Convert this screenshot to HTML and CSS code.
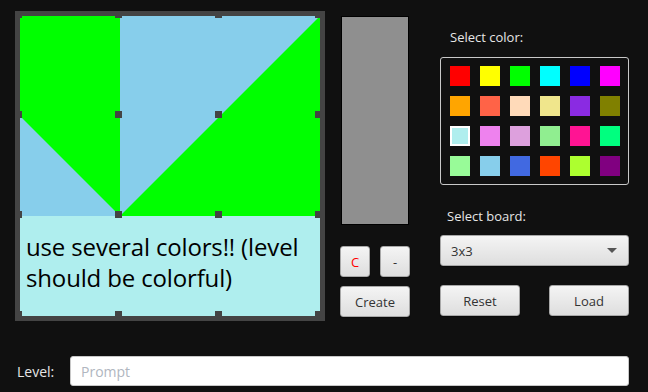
FILE: index.html
```html
<!DOCTYPE html>
<html lang="en">
<head>
<meta charset="UTF-8">
<title>Level Editor</title>
<link rel="stylesheet" href="styles.css">
</head>
<body>
<div class="editor">
    <div class="top">
        <div class="board">
            <svg class="cells" width="300" height="200" viewBox="0 0 300 200">
                <rect x="0" y="0" width="100" height="200" fill="#00ff00"/>
                <polygon points="0,100 100,200 0,200" fill="#87ceeb"/>
                <rect x="100" y="0" width="200" height="200" fill="#87ceeb"/>
                <polygon points="300,0 300,200 100,200" fill="#00ff00"/>
            </svg>
            <div class="hint">use several colors!! (level should be colorful)</div>
            <div class="dots" id="dots"></div>
        </div>

        <div class="middle">
            <div class="preview"></div>
            <div class="small-row">
                <button class="btn btn-sq btn-clear">C</button>
                <button class="btn btn-sq">-</button>
            </div>
            <button class="btn btn-wide">Create</button>
        </div>

        <div class="side">
            <div class="label">Select color:</div>
            <div class="palette" id="palette"></div>
            <div class="label label-board">Select board:</div>
            <div class="combo">
                <span>3x3</span>
                <span class="arrow"></span>
            </div>
            <div class="actions">
                <button class="btn btn-action">Reset</button>
                <button class="btn btn-action">Load</button>
            </div>
        </div>
    </div>

    <div class="level-row">
        <label class="level-label" for="level">Level:</label>
        <input id="level" class="level-input" type="text" placeholder="Prompt">
    </div>
</div>

<script>
const colors = [
    'red', 'yellow', 'lime', 'aqua', 'blue', 'magenta',
    'orange', 'tomato', 'peachpuff', 'khaki', 'blueviolet', 'olive',
    'paleturquoise', 'violet', 'plum', 'lightgreen', 'deeppink', 'springgreen',
    'palegreen', 'skyblue', 'royalblue', 'orangered', 'greenyellow', 'purple'
];
const palette = document.getElementById('palette');
palette.innerHTML = colors.map((c, i) =>
    `<div class="swatch${i === 12 ? ' selected' : ''}" style="background:${c}"></div>`
).join('');

const dots = document.getElementById('dots');
let html = '';
for (let y = 0; y <= 300; y += 100) {
    for (let x = 0; x <= 300; x += 100) {
        html += `<span class="dot" style="left:${x - 5}px;top:${y - 5}px"></span>`;
    }
}
dots.innerHTML = html;
</script>
</body>
</html>
```

FILE: styles.css
```css
body {
    margin: 0;
    background: #101010;
    font-family: 'Open Sans', 'Noto Sans', sans-serif;
    font-size: 13px;
    color: #e6e6e6;
}

.editor {
    width: 648px;
    height: 392px;
    padding: 11px 0 0 15px;
    box-sizing: border-box;
}

.top {
    display: flex;
    height: 310px;
}

/* board */
.board {
    position: relative;
    width: 300px;
    height: 300px;
    border: 5px solid #444;
    background: #afeeee;
}

.cells {
    display: block;
}

.hint {
    height: 100px;
    box-sizing: border-box;
    padding: 15px 6px 0;
    font-size: 24px;
    line-height: 31px;
    color: #000;
    letter-spacing: -0.15px;
}

.dots {
    position: absolute;
    left: 0;
    top: 0;
}

.dot {
    position: absolute;
    width: 7px;
    height: 7px;
    background: #444;
}

/* middle column */
.middle {
    display: flex;
    flex-direction: column;
    width: 70px;
    margin-left: 15px;
}

.preview {
    width: 66px;
    height: 207px;
    margin: 5px 0 0 1px;
    background: #8f8f8f;
    border: 1px solid #000;
}

.small-row {
    display: flex;
    justify-content: space-between;
    margin-top: 21px;
}

.btn {
    font-family: inherit;
    font-size: 13px;
    color: #333;
    height: 31px;
    padding: 0;
    border: 1px solid #a8a8a8;
    border-radius: 3px;
    background: linear-gradient(#f4f4f4, #dedede);
    box-shadow: 0 1px 1px rgba(0, 0, 0, 0.4);
}

.btn-sq {
    width: 30px;
}

.btn-clear {
    color: #ff0000;
}

.btn-wide {
    width: 70px;
    margin-top: 9px;
}

/* right column */
.side {
    display: flex;
    flex-direction: column;
    width: 189px;
    margin-left: 30px;
}

.label {
    height: 18px;
    line-height: 18px;
    margin: 17px 0 11px 10px;
}

.palette {
    display: grid;
    grid-template-columns: repeat(6, 20px);
    grid-auto-rows: 20px;
    gap: 10px;
    padding: 8px 9px 8px 9px;
    border: 1px solid #c8c8c8;
    border-radius: 3px;
}

.swatch {
    box-sizing: border-box;
}

.swatch.selected {
    border: 2px solid #fff;
}

.label-board {
    margin: 22px 0 10px 7px;
}

.combo {
    display: flex;
    align-items: center;
    justify-content: space-between;
    height: 31px;
    box-sizing: border-box;
    padding: 0 10px;
    color: #333;
    border: 1px solid #a8a8a8;
    border-radius: 3px;
    background: linear-gradient(#f4f4f4, #dedede);
    box-shadow: 0 1px 1px rgba(0, 0, 0, 0.4);
}

.arrow {
    width: 0;
    height: 0;
    border-left: 5px solid transparent;
    border-right: 5px solid transparent;
    border-top: 5px solid #555;
    margin-right: 1px;
}

.actions {
    display: flex;
    justify-content: space-between;
    margin-top: 19px;
}

.btn-action {
    width: 80px;
}

/* bottom row */
.level-row {
    display: flex;
    align-items: center;
    margin-top: 35px;
}

.level-label {
    width: 53px;
    margin-left: 2px;
    font-size: 14px;
}

.level-input {
    width: 559px;
    height: 30px;
    box-sizing: border-box;
    padding: 0 10px;
    font-family: inherit;
    font-size: 14px;
    border: 1px solid #c8c8c8;
    border-radius: 3px;
    background: #fff;
    outline: none;
}

.level-input::placeholder {
    color: #b0b6c0;
}
```
